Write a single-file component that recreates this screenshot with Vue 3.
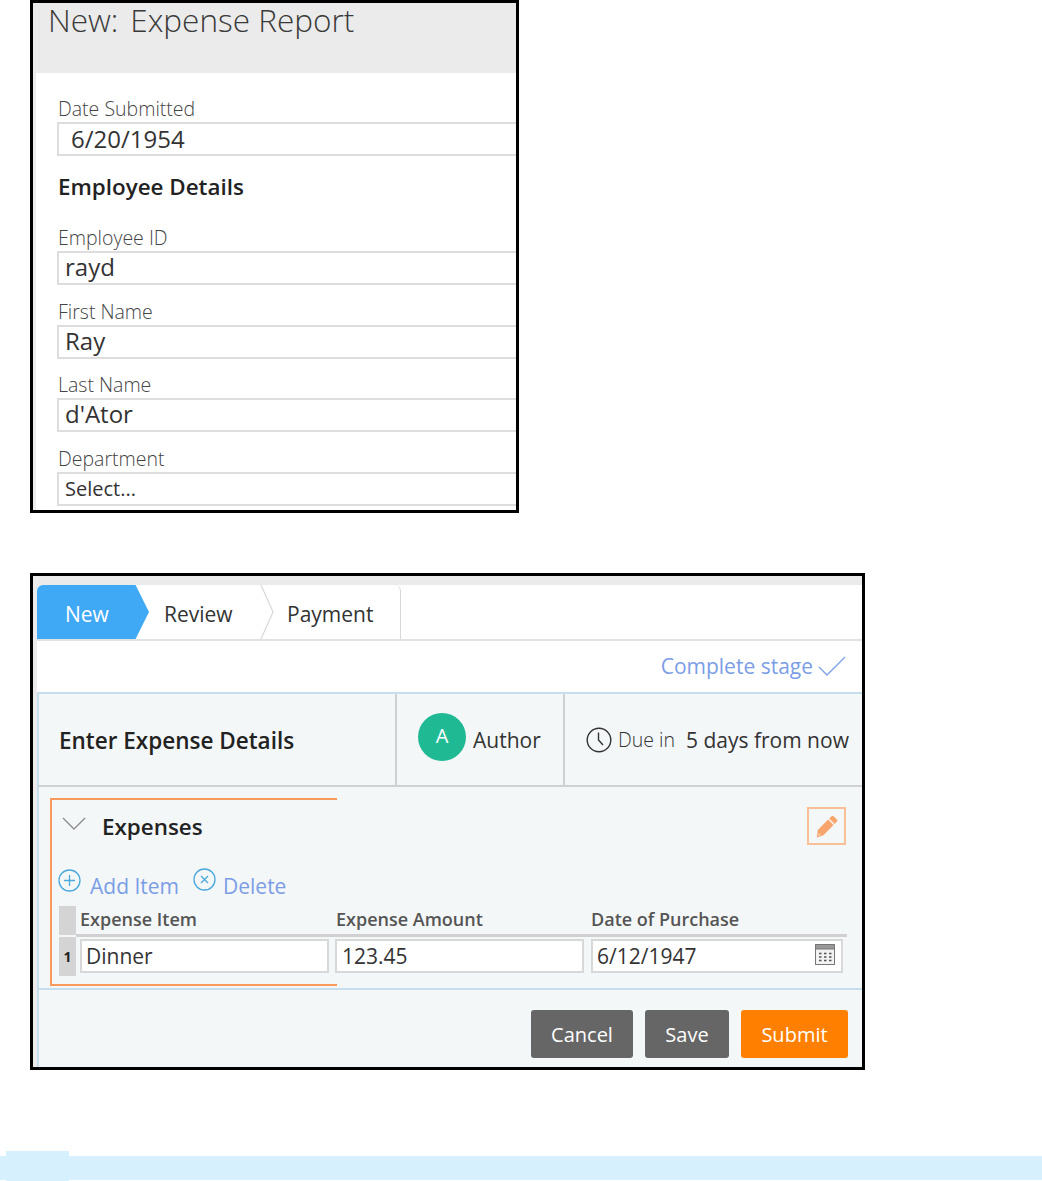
<script setup>
const fields = [
  { label: 'Employee ID', value: 'rayd', big: true },
  { label: 'First Name', value: 'Ray', big: true },
  { label: 'Last Name', value: "d'Ator", big: true },
  { label: 'Department', value: 'Select...', big: false },
]
</script>

<template>
  <div class="page">
    <section class="shot form-shot">
      <header class="form-title"><span class="new">New:</span><span class="name">Expense Report</span></header>
      <div class="form-body">
        <div class="field">
          <label>Date Submitted</label>
          <div class="input big date">6/20/1954</div>
        </div>
        <h2>Employee Details</h2>
        <div class="field-list">
          <div v-for="f in fields" :key="f.label" class="field">
            <label>{{ f.label }}</label>
            <div class="input" :class="{ big: f.big, sel: !f.big }">{{ f.value }}</div>
          </div>
        </div>
      </div>
    </section>

    <section class="shot case-shot">
      <div class="stages">
        <div class="stage-tabs">
          <div class="stage active">New</div>
          <div class="stage review">Review</div>
          <svg class="sep" width="14" height="54" viewBox="0 0 14 54"><path d="M1 0 L13 27 L1 54" fill="none" stroke="#d8d8d8" stroke-width="1.2"/></svg>
          <div class="stage payment">Payment</div>
        </div>
      </div>
      <div class="complete">
        <span>Complete stage</span>
        <svg width="28" height="20" viewBox="0 0 28 20"><path d="M1 11 L9 19 L27 1" fill="none" stroke="#7d9fe6" stroke-width="1.3"/></svg>
      </div>
      <div class="assign">
        <div class="a-title">Enter Expense Details</div>
        <div class="a-role">
          <span class="avatar">A</span>
          <span class="author">Author</span>
        </div>
        <div class="a-due">
          <svg width="26" height="26" viewBox="0 0 26 26"><circle cx="13" cy="13" r="11.8" fill="none" stroke="#333" stroke-width="1.4"/><path d="M12.5 5.5 V13 L17 18" fill="none" stroke="#333" stroke-width="1.4"/></svg>
          <span class="due">Due in</span>
          <span class="when">5 days from now</span>
        </div>
      </div>
      <div class="content">
        <div class="expenses">
          <div class="exp-head">
            <svg class="exp-chev" width="24" height="13" viewBox="0 0 24 13"><path d="M1 1 L12 12 L23 1" fill="none" stroke="#8b8b8b" stroke-width="1.3"/></svg>
            <span class="exp-title">Expenses</span>
          </div>
          <div class="actions">
            <svg class="act-ico" width="23" height="23" viewBox="0 0 23 23"><circle cx="11.5" cy="11.5" r="10.5" fill="none" stroke="#4aa8dc" stroke-width="1.3"/><path d="M11.5 6 V17 M6 11.5 H17" stroke="#4aa8dc" stroke-width="1.3"/></svg>
            <span class="act add">Add Item</span>
            <svg class="act-ico del" width="23" height="23" viewBox="0 0 23 23"><circle cx="11.5" cy="11.5" r="10.5" fill="none" stroke="#4aa8dc" stroke-width="1.3"/><path d="M8 8 L15 15 M15 8 L8 15" stroke="#4aa8dc" stroke-width="1.3"/></svg>
            <span class="act del-text">Delete</span>
          </div>
          <div class="table">
            <div class="idx">
              <div class="idx-top"></div>
              <div class="idx-num">1</div>
            </div>
            <div class="t-main">
              <div class="t-head">
                <span class="c1">Expense Item</span>
                <span class="c2">Expense Amount</span>
                <span class="c3">Date of Purchase</span>
              </div>
              <div class="t-row">
                <div class="cell c1">Dinner</div>
                <div class="cell c2">123.45</div>
                <div class="cell c3">
                  6/12/1947
                  <svg class="cal" width="20" height="21" viewBox="0 0 20 21">
                    <rect x="0.5" y="0.5" width="19" height="20" fill="#f2f2f2" stroke="#777"/>
                    <rect x="0.5" y="0.5" width="19" height="4.5" fill="#999" stroke="#777"/>
                    <path d="M4 9.5h2.5M9 9.5h2.5M14 9.5h2.5M4 13h2.5M9 13h2.5M14 13h2.5M4 16.5h2.5M9 16.5h2.5M14 16.5h2.5" stroke="#555" stroke-width="1.6"/>
                  </svg>
                </div>
              </div>
            </div>
          </div>
          <button class="edit" type="button" aria-label="Edit">
            <svg width="22" height="23" viewBox="0 0 22 23"><path d="M15.6 1.2 Q16.6 0.4 17.6 1.2 L21 4.6 Q21.8 5.6 21 6.6 L18.6 9 L13.2 3.6 Z M12.2 4.6 L17.6 10 L7.4 20.2 L0.8 22.4 L1.8 15 Z" fill="#f7a56c"/><path d="M2.6 18 L4.6 20 L2.2 20.6 Z" fill="#fbdcc6"/></svg>
          </button>
        </div>
      </div>
      <div class="footer">
        <button class="btn grey cancel" type="button">Cancel</button>
        <button class="btn grey save" type="button">Save</button>
        <button class="btn submit" type="button">Submit</button>
      </div>
    </section>

    <div class="note-bar"><div class="note-tab"></div></div>
  </div>
</template>

<style>
html, body { margin: 0; background: #fff; }
</style>

<style scoped>
.page {
  width: 1042px;
  height: 1181px;
  overflow: hidden;
  font-family: "Open Sans", "Liberation Sans", sans-serif;
  color: #333;
  display: flex;
  flex-direction: column;
}
.shot {
  box-sizing: border-box;
  border: 3px solid #000;
  margin-left: 30px;
  background: #fff;
}
.form-shot { width: 489px; height: 513px; flex: none; }
.form-title {
  height: 70px;
  box-sizing: border-box;
  background: #ebebeb;
  padding: 0 0 0 15px;
  font-size: 31.5px;
  font-weight: 300;
  line-height: 34px;
  color: #3a3a3a;
  display: flex;
  gap: 12px;
}
.form-body {
  height: 437px;
  box-sizing: border-box;
  border-left: 3px solid #ebebeb;
  padding: 26px 0 0 22px;
}
label {
  display: block;
  font-size: 19.5px;
  font-weight: 300;
  line-height: 20px;
  margin-bottom: 3px;
  color: #444;
}
.input {
  box-sizing: border-box;
  height: 34px;
  border: 2px solid #ddd;
  border-right: 0;
  margin-left: -1px;
  padding-left: 6px;
  font-size: 24px;
  line-height: 28px;
  color: #333;
}
.input.date { padding-left: 12px; line-height: 30px; }
.input.sel { font-size: 20px; line-height: 30px; }
h2 {
  margin: 19px 0 29px;
  font-size: 22.4px;
  line-height: 24px;
  font-weight: 600;
  color: #222;
}
.field-list { display: flex; flex-direction: column; gap: 16.7px; }

.case-shot {
  width: 835px;
  height: 497px;
  flex: none;
  margin-top: 60px;
  background: #ebebeb;
  padding: 9px 0 0 4px;
  display: flex;
  flex-direction: column;
}
.stages {
  height: 56px;
  flex: none;
  box-sizing: border-box;
  background: #fff;
  border-bottom: 2px solid #e2e2e2;
  border-top-left-radius: 6px;
}
.stage-tabs {
  width: 364px;
  height: 54px;
  box-sizing: border-box;
  border-right: 1px solid #d8d8d8;
  border-top-right-radius: 6px;
  display: flex;
  align-items: stretch;
}
.stage {
  font-size: 21px;
  padding-top: 5px;
  line-height: 49px;
  box-sizing: border-box;
}
.stage.active {
  width: 112px;
  padding-left: 28px;
  background: #3fa9f5;
  color: #fff;
  border-top-left-radius: 6px;
  clip-path: polygon(0 0, 88% 0, 100% 50%, 88% 100%, 0 100%);
}
.review { width: 111px; padding-left: 15px; }
.sep { flex: none; }
.payment { padding-left: 13px; }
.complete {
  height: 51px;
  flex: none;
  background: #fff;
  box-sizing: border-box;
  display: flex;
  justify-content: flex-end;
  align-items: center;
  gap: 5px;
  padding: 0 16px 2px 0;
  font-size: 21px;
  color: #7b9de6;
}
.assign {
  height: 95px;
  flex: none;
  box-sizing: border-box;
  background: #f4f7f8;
  border-top: 2px solid #c5dfee;
  border-left: 2px solid #c5dfee;
  border-bottom: 2px solid #d0d0d0;
  display: flex;
  font-size: 21px;
}
.a-title {
  width: 358px;
  box-sizing: border-box;
  padding: 2px 0 0 20px;
  font-size: 22.5px;
  font-weight: 600;
  color: #222;
  line-height: 89px;
  border-right: 2px solid #d0d0d0;
}
.a-role {
  width: 168px;
  box-sizing: border-box;
  padding: 0 0 5px 21px;
  display: flex;
  align-items: center;
  gap: 7px;
  border-right: 2px solid #d0d0d0;
}
.author { margin-top: 6px; }
.avatar {
  width: 48px;
  height: 48px;
  border-radius: 50%;
  background: #1fba94;
  color: #fff;
  font-size: 20px;
  display: flex;
  align-items: center;
  justify-content: center;
  flex: none;
  padding-bottom: 4px;
  box-sizing: border-box;
}
.a-due {
  flex: 1;
  display: flex;
  align-items: center;
  padding: 0 0 0 21px;
  white-space: nowrap;
}
.due { margin-left: 6px; font-size: 19.5px; font-weight: 300; }
.when { margin-left: 11px; }

.content {
  height: 203px;
  flex: none;
  box-sizing: border-box;
  background: #f4f7f8;
  border-left: 2px solid #c5dfee;
  border-bottom: 2px solid #c5dfee;
  padding: 11px 0 0 11px;
}
.expenses {
  position: relative;
  width: 796px;
  height: 188px;
  box-sizing: border-box;
  padding: 0 0 0 7px;
}
.expenses::before {
  content: "";
  position: absolute;
  left: 0;
  top: 0;
  width: 287px;
  height: 188px;
  box-sizing: border-box;
  border: 2px solid #f79a5b;
  border-right: 0;
  pointer-events: none;
}
.exp-head {
  height: 60px;
  display: flex;
  align-items: center;
  padding: 0 0 4px 5px;
  box-sizing: border-box;
}
.exp-chev { margin-bottom: 6px; }
.exp-title {
  margin-left: 16px;
  font-size: 22.4px;
  font-weight: 600;
  color: #222;
}
.actions {
  height: 48px;
  display: flex;
  align-items: flex-start;
  padding: 11px 0 0 1px;
  box-sizing: border-box;
}
.act-ico { flex: none; }
.act-ico.del { margin-left: 14px; margin-top: -1px; }
.act {
  margin-left: 9px;
  margin-top: 2px;
  font-size: 21px;
  line-height: 30px;
  color: #7b9de6;
}
.act.del-text { margin-left: 7px; }
.table { display: flex; height: 70px; }
.idx { width: 17px; flex: none; padding-left: 2px; box-sizing: content-box; margin-right: 0; }
.idx-top { height: 29px; background: #d4d4d4; }
.idx-num {
  margin-top: 2px;
  height: 39px;
  background: #d4d4d4;
  font-size: 14px;
  font-weight: 700;
  line-height: 39px;
  text-align: center;
  color: #222;
}
.t-main { width: 771px; flex: none; }
.t-head {
  height: 31px;
  box-sizing: border-box;
  border-bottom: 3px solid #d0d0d0;
  display: flex;
  padding-left: 4px;
  font-size: 18px;
  font-weight: 600;
  line-height: 26px;
  color: #555;
}
.t-head .c1 { width: 256px; }
.t-head .c2 { width: 255px; }
.t-row {
  display: flex;
  gap: 6px;
  padding: 2px 0 0 4px;
}
.cell {
  position: relative;
  height: 34px;
  box-sizing: border-box;
  border: 2px solid #d8d8d8;
  background: #fff;
  padding-left: 4px;
  font-size: 21px;
  line-height: 30px;
  color: #333;
}
.cell.c1, .cell.c2 { width: 249px; }
.cell.c2 { padding-left: 5px; }
.cell.c3 { width: 252px; margin-left: 1px; }
.cal { position: absolute; right: 6px; top: 3px; }
.edit {
  position: absolute;
  left: 757px;
  top: 9px;
  width: 39px;
  height: 38px;
  padding: 0;
  box-sizing: border-box;
  border: 2px solid #f9c097;
  background: transparent;
  display: flex;
  align-items: center;
  justify-content: center;
}
.footer {
  flex: 1;
  background: #f4f7f8;
  border-left: 2px solid #c5dfee;
  display: flex;
  justify-content: flex-end;
  gap: 12px;
  padding: 20px 14px 0 0;
  box-sizing: border-box;
}
.btn {
  height: 48px;
  border: 0;
  border-radius: 3px;
  padding: 0;
  color: #fff;
  font-family: inherit;
  font-size: 20px;
}
.grey { background: #666; }
.cancel { width: 102px; }
.save { width: 84px; }
.submit { width: 107px; background: #ff8000; }

.note-bar {
  position: relative;
  height: 24px;
  margin-top: 86px;
  background: #d7f0fd;
  flex: none;
}
.note-tab {
  position: absolute;
  left: 6px;
  top: -5px;
  width: 63px;
  height: 30px;
  background: #d7f0fd;
}
</style>
